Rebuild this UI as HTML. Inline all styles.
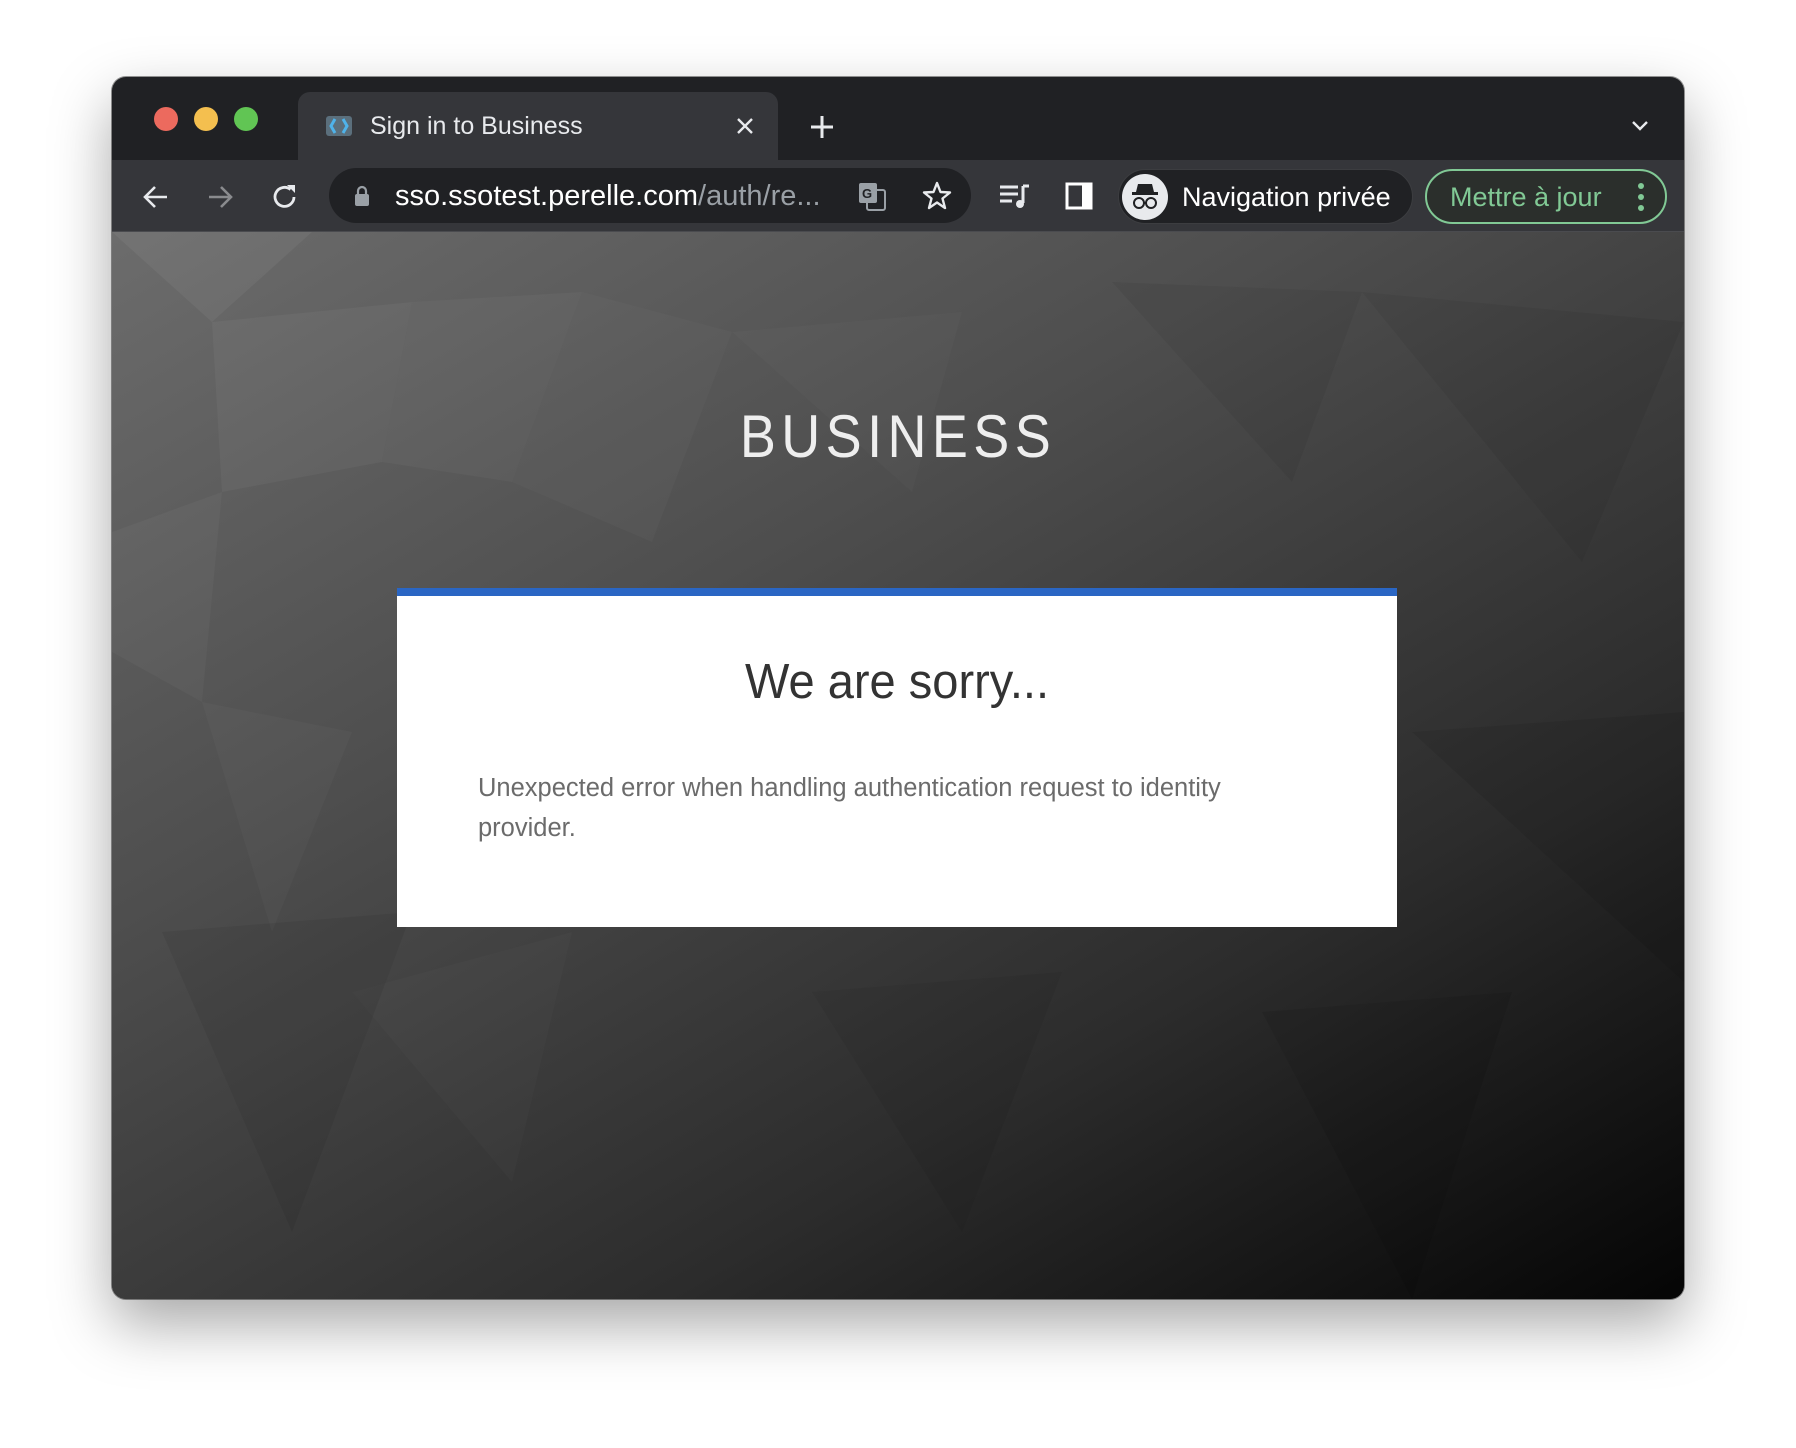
<!DOCTYPE html>
<html><head><meta charset="utf-8"><style>
*{margin:0;padding:0;box-sizing:border-box}
body{width:1796px;height:1448px;background:#fff;position:relative;overflow:hidden;font-family:"Liberation Sans",sans-serif}
.win{position:absolute;left:112px;top:77px;width:1572px;height:1222px;border-radius:14px;overflow:hidden;background:#202124;box-shadow:0 25px 60px rgba(0,0,0,.35),0 0 0 1px rgba(0,0,0,.4)}
.dot{position:absolute;top:107px;width:24px;height:24px;border-radius:50%}
.tab{position:absolute;left:186px;top:15px;width:480px;height:70px;background:#35363a;border-radius:12px 12px 0 0}
.toolbar{position:absolute;left:0;top:83px;width:1572px;height:72px;background:#35363a;border-bottom:1px solid #4a4b4f}
.omni{position:absolute;left:217px;top:8px;width:642px;height:55px;border-radius:28px;background:#202124}
.content{position:absolute;left:0;top:155px;width:1572px;height:1067px;overflow:hidden;background:linear-gradient(150deg,#6c6c6c 0%,#4e4e4e 35%,#2c2c2c 70%,#050505 100%)}
.card{position:absolute;left:285px;top:356px;width:1000px;height:339px;background:#fff;border-top:8px solid #2a66c4}
</style></head><body>
<div class="win">
 <div class="dot" style="left:42px;top:30px;background:#ec6a5e"></div>
 <div class="dot" style="left:82px;top:30px;background:#f4bf4f"></div>
 <div class="dot" style="left:122px;top:30px;background:#61c554"></div>
 <div class="tab">
  <svg style="position:absolute;left:26px;top:20px" width="30" height="28" viewBox="0 0 30 28"><rect x="2" y="4" width="26" height="20" rx="3" fill="#5b6f7c"/><path d="M11 7 L7 14 L11 21" stroke="#4fb3ea" stroke-width="3" fill="none"/><path d="M19 7 L23 14 L19 21" stroke="#4fb3ea" stroke-width="3" fill="none"/></svg>
  <div style="position:absolute;left:72px;top:20px;color:#e8eaed;font-size:25px">Sign in to Business</div>
  <svg style="position:absolute;left:438px;top:25px" width="18" height="18" viewBox="0 0 18 18"><path d="M2 2L16 16M16 2L2 16" stroke="#e8eaed" stroke-width="2.4"/></svg>
 </div>
 <svg style="position:absolute;left:697px;top:37px" width="26" height="26" viewBox="0 0 26 26"><path d="M13 2V24M2 13H24" stroke="#e8eaed" stroke-width="3"/></svg>
 <svg style="position:absolute;left:1518px;top:42px" width="20" height="14" viewBox="0 0 20 14"><path d="M3 3L10 10L17 3" stroke="#e8eaed" stroke-width="2.4" fill="none"/></svg>
 <div class="toolbar">
  <svg style="position:absolute;left:30px;top:23px" width="28" height="28" viewBox="0 0 28 28"><path d="M25 14H4M13 4L3 14L13 24" stroke="#e8eaed" stroke-width="2.6" fill="none"/></svg>
  <svg style="position:absolute;left:94px;top:23px" width="28" height="28" viewBox="0 0 28 28"><path d="M3 14H24M15 4L25 14L15 24" stroke="#8a8b8e" stroke-width="2.6" fill="none"/></svg>
  <svg style="position:absolute;left:158px;top:22px" width="30" height="30" viewBox="0 0 30 30"><path d="M24 15A9.5 9.5 0 1 1 20.5 7.5" stroke="#e8eaed" stroke-width="2.8" fill="none"/><path d="M17 3H25V11Z" fill="#e8eaed"/></svg>
  <div class="omni">
   <svg style="position:absolute;left:25px;top:17px" width="16" height="22" viewBox="0 0 16 22"><path d="M4 9V6A4 4 0 0 1 12 6V9" stroke="#9aa0a6" stroke-width="2.2" fill="none"/><rect x="1" y="9" width="14" height="12" rx="2" fill="#9aa0a6"/></svg>
   <div style="position:absolute;left:66px;top:12px;font-size:29px;color:#fff;white-space:nowrap">sso.ssotest.perelle.com<span style="color:#9aa0a6">/auth/re...</span></div>
   <svg style="position:absolute;left:528px;top:13px" width="30" height="30" viewBox="0 0 30 30"><rect x="2" y="2" width="18" height="20" rx="2" fill="#9aa0a6"/><rect x="10" y="9" width="18" height="20" rx="2" fill="none" stroke="#9aa0a6" stroke-width="2"/><text x="5" y="17" font-size="13" font-weight="bold" fill="#202124" font-family="Liberation Sans">G</text></svg>
   <svg style="position:absolute;left:592px;top:12px" width="32" height="32" viewBox="0 0 32 32"><path d="M16 3L19.5 12L29 12.5L21.5 18.5L24 28L16 22.5L8 28L10.5 18.5L3 12.5L12.5 12Z" stroke="#e8eaed" stroke-width="2.4" fill="none" stroke-linejoin="round"/></svg>
  </div>
  <svg style="position:absolute;left:886px;top:22px" width="34" height="28" viewBox="0 0 34 28"><path d="M2 5H20M2 12H20M2 19H14" stroke="#e8eaed" stroke-width="3"/><path d="M25 4V21" stroke="#e8eaed" stroke-width="3"/><path d="M25 4H31" stroke="#e8eaed" stroke-width="3"/><circle cx="22" cy="22" r="4" fill="#e8eaed"/></svg>
  <svg style="position:absolute;left:952px;top:21px" width="30" height="30" viewBox="0 0 30 30"><rect x="3" y="3" width="24" height="24" fill="none" stroke="#fff" stroke-width="3"/><rect x="18" y="3" width="9" height="24" fill="#fff"/></svg>
  <div style="position:absolute;left:1006px;top:9px;width:295px;height:55px;border-radius:28px;background:#202124;border:1px solid #3c3d40">
   <div style="position:absolute;left:3px;top:4px;width:46px;height:46px;border-radius:50%;background:#e8eaed"></div>
   <svg style="position:absolute;left:8px;top:10px" width="36" height="34" viewBox="0 0 36 34"><path d="M11 4H25L27 12H9Z" fill="#202124"/><rect x="5" y="12" width="26" height="3" fill="#202124"/><circle cx="12" cy="23" r="5" fill="none" stroke="#202124" stroke-width="2"/><circle cx="24" cy="23" r="5" fill="none" stroke="#202124" stroke-width="2"/><path d="M17 23H19" stroke="#202124" stroke-width="2"/></svg>
   <div style="position:absolute;left:63px;top:12px;font-size:27px;color:#fff;white-space:nowrap">Navigation privée</div>
  </div>
  <div style="position:absolute;left:1313px;top:9px;width:242px;height:55px;border-radius:28px;border:2px solid #81c995;background:#2b2f2c">
   <div style="position:absolute;left:23px;top:11px;font-size:27px;color:#81c995;white-space:nowrap">Mettre à jour</div>
   <svg style="position:absolute;left:209px;top:10px" width="10" height="32" viewBox="0 0 10 32"><circle cx="5" cy="5" r="3" fill="#81c995"/><circle cx="5" cy="16" r="3" fill="#81c995"/><circle cx="5" cy="27" r="3" fill="#81c995"/></svg>
  </div>
 </div>
 <div class="content">
  <svg style="position:absolute;left:0;top:0" width="1572" height="1067" viewBox="0 0 1572 1067">
   <g fill="#fff">
    <polygon points="0,0 200,0 100,90" opacity=".05"/>
    <polygon points="100,90 300,70 270,230 110,260" opacity=".04"/>
    <polygon points="300,70 470,60 400,250 270,230" opacity=".03"/>
    <polygon points="470,60 620,100 540,310 400,250" opacity=".025"/>
    <polygon points="0,300 110,260 90,470 0,420" opacity=".03"/>
    <polygon points="620,100 850,80 800,260" opacity=".02"/>
    <polygon points="90,470 240,500 160,700" opacity=".025"/>
    <polygon points="240,760 460,700 400,950" opacity=".02"/>
   </g>
   <g fill="#000">
    <polygon points="1000,50 1250,60 1180,250" opacity=".05"/>
    <polygon points="1250,60 1572,90 1470,330" opacity=".05"/>
    <polygon points="1300,500 1572,480 1572,750" opacity=".07"/>
    <polygon points="1150,780 1400,760 1300,1067" opacity=".08"/>
    <polygon points="700,760 950,740 850,1000" opacity=".05"/>
    <polygon points="50,700 300,680 180,1000" opacity=".06"/>
   </g>
  </svg>
  <div style="position:absolute;left:0;width:1572px;top:170px;text-align:center;color:#eee;font-size:60px;letter-spacing:6px;transform:scaleX(0.9)">BUSINESS</div>
  <div class="card">
   <div style="position:absolute;left:0;width:1000px;top:58px;text-align:center;color:#333;font-size:49px;transform:scaleX(0.96)">We are sorry...</div>
   <div style="position:absolute;left:81px;top:172px;width:780px;color:#6b6b6b;font-size:25.5px;line-height:40px">Unexpected error when handling authentication request to identity provider.</div>
  </div>
 </div>
</div>
</body></html>
